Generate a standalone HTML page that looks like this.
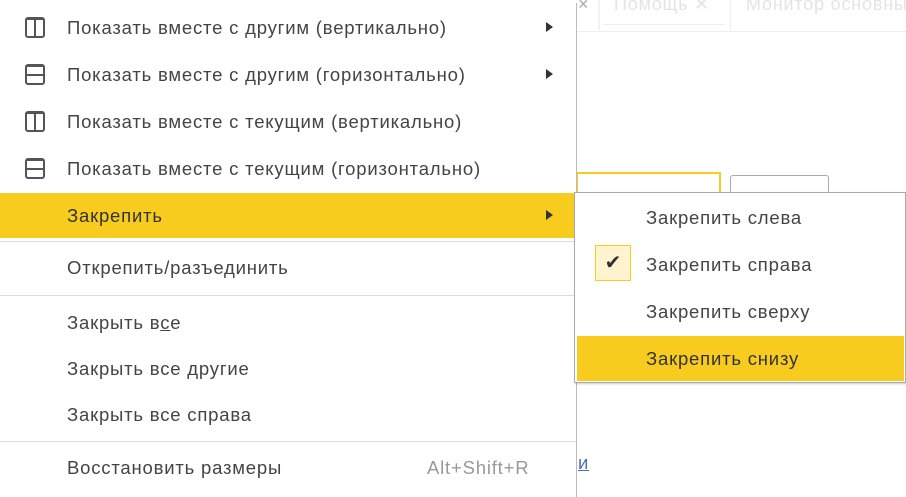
<!DOCTYPE html>
<html><head><meta charset="utf-8"><style>
body{margin:0;width:906px;height:497px;position:relative;overflow:hidden;background:#fff;font-family:"Liberation Sans",sans-serif;font-size:18.5px;letter-spacing:0.8px;color:#444}
.a{position:absolute}
.menu{left:0;top:3px;width:576px;height:494px;border-right:1px solid #bbb;background:#fff}
.it{position:absolute;left:0;width:576px;height:45px;line-height:45px;white-space:nowrap}
.it span{position:absolute;left:67px}
.sel{background:#f8cb1f;color:#333}
.arr{position:absolute;left:546px;top:17px;width:0;height:0;border-left:7px solid #333;border-top:5px solid transparent;border-bottom:5px solid transparent}
.sep{position:absolute;left:0;width:576px;height:1px;background:#ddd}
.ico{position:absolute;left:25px;top:12px;width:20px;height:21px;border:2px solid #555;border-radius:3px;box-sizing:border-box}
.v:after{content:"";position:absolute;left:7px;top:0;width:2px;height:17px;background:#555}
.h:after{content:"";position:absolute;left:0;top:7px;width:16px;height:2px;background:#555}
.h{border-top-width:3px}.v{border-top-width:3px}
.sub{left:574px;top:192px;width:330px;height:189px;border:1px solid #aaa;background:#fff;box-shadow:1px 1px 2px rgba(0,0,0,.2)}
.si{position:absolute;left:2px;width:327px;height:45px;line-height:45px;white-space:nowrap}
.si span{position:absolute;left:69px}
</style></head><body>
<div class="a" style="left:0;top:0;width:906px;height:31px;border-bottom:1px solid #eee"></div>
<div class="a" style="left:578px;top:-6px;color:#aaa;font-size:18px">×</div>
<div class="a" style="left:598px;top:0;width:2px;height:30px;background:#f2f2f2"></div>
<div class="a" style="left:614px;top:-6px;color:#e4e4e4;font-size:18px">Помощь&nbsp;✕</div>
<div class="a" style="left:603px;top:24px;width:122px;height:1px;background:#eee"></div>
<div class="a" style="left:730px;top:0;width:1px;height:30px;background:#eee"></div>
<div class="a" style="left:746px;top:-6px;color:#e4e4e4;font-size:18px;white-space:nowrap">Монитор основны</div>
<div class="a" style="left:576px;top:172px;width:141px;height:30px;border:2px solid #f8cb1f;border-bottom:none"></div>
<div class="a" style="left:730px;top:175px;width:97px;height:28px;border:1px solid #aaa;border-radius:3px"></div>
<div class="a" style="left:578px;top:452px;color:#4a6fb5;text-decoration:underline">и</div>
<div class="a menu">
<div class="it" style="top:2px"><i class="ico v"></i><span>Показать вместе с другим (вертикально)</span><i class="arr"></i></div>
<div class="it" style="top:49px"><i class="ico h"></i><span>Показать вместе с другим (горизонтально)</span><i class="arr"></i></div>
<div class="it" style="top:96px"><i class="ico v"></i><span>Показать вместе с текущим (вертикально)</span></div>
<div class="it" style="top:143px"><i class="ico h"></i><span>Показать вместе с текущим (горизонтально)</span></div>
<div class="it sel" style="top:190px"><span>Закрепить</span><i class="arr"></i></div>
<div class="sep" style="top:238px"></div>
<div class="it" style="top:242px"><span>Открепить/разъединить</span></div>
<div class="sep" style="top:292px"></div>
<div class="it" style="top:297px"><span>Закрыть в<u>с</u>е</span></div>
<div class="it" style="top:343px"><span>Закрыть все другие</span></div>
<div class="it" style="top:389px"><span>Закрыть все справа</span></div>
<div class="sep" style="top:438px"></div>
<div class="it" style="top:442px"><span>Восстановить размеры</span><span style="left:427px;color:#999">Alt+Shift+R</span></div>
</div>
<div class="a sub">
<div class="si" style="top:2px"><span>Закрепить слева</span></div>
<div class="si" style="top:49px"><div class="a" style="left:18px;top:3px;width:36px;height:36px;border:1px solid #f8cb1f;background:#fff3d0;box-sizing:border-box;line-height:34px;text-align:center;color:#333;font-size:20px;letter-spacing:0">✔</div><span>Закрепить справа</span></div>
<div class="si" style="top:96px"><span>Закрепить сверху</span></div>
<div class="si sel" style="top:143px"><span>Закрепить снизу</span></div>
</div>
</body></html>
